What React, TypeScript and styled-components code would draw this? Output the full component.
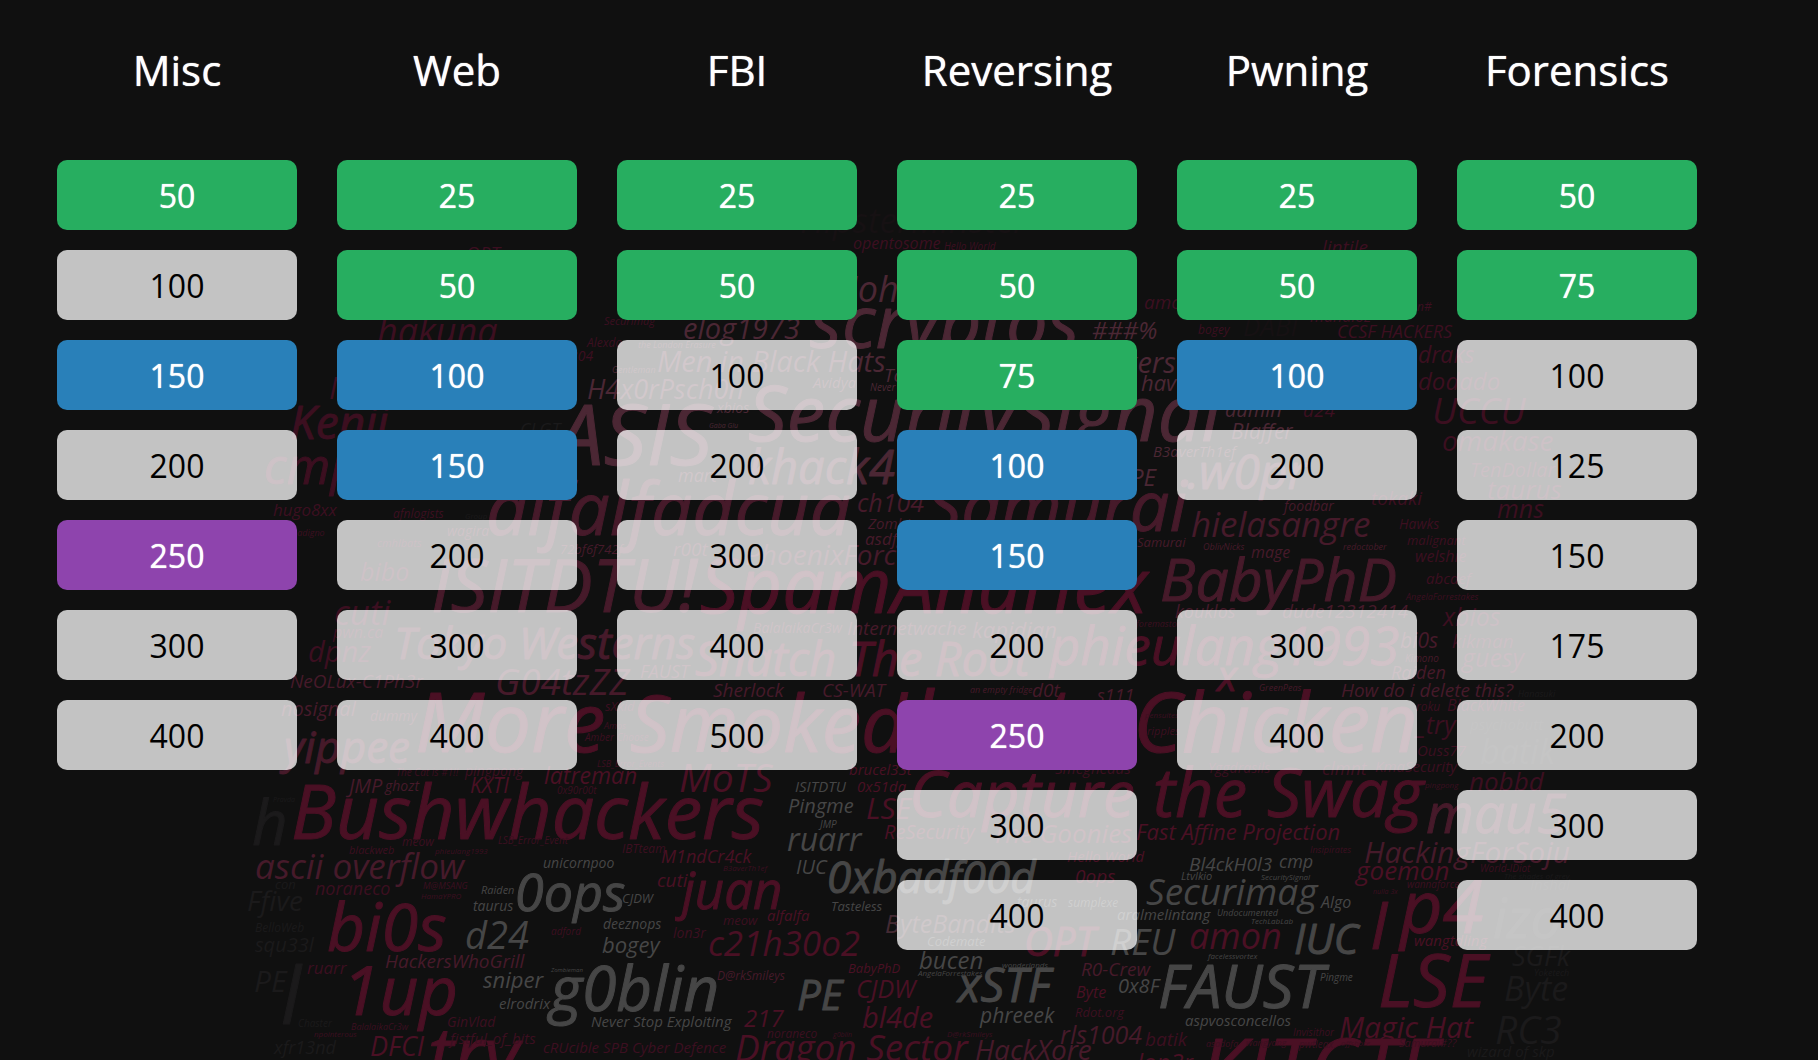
import React from 'react';
import styled, { createGlobalStyle, css } from 'styled-components';

const GlobalStyle = createGlobalStyle`
  *, *::before, *::after { box-sizing: border-box; }
  html, body, #root { min-height: 100%; }
  body {
    margin: 0;
    background: #101010;
    color: #fff;
    font-family: "Open Sans", "Noto Sans", sans-serif;
  }
`;

type Status = 'open' | 'solved' | 'attempted' | 'bonus';

/* null leaves a slot of the column empty. */
type Category = { name: string; challenges: ([number, Status] | null)[] };

const categories: Category[] = [
  {
    name: 'Misc',
    challenges: [[50, 'solved'], [100, 'open'], [150, 'attempted'], [200, 'open'], [250, 'bonus'], [300, 'open'], [400, 'open']],
  },
  {
    name: 'Web',
    challenges: [[25, 'solved'], [50, 'solved'], [100, 'attempted'], [150, 'attempted'], [200, 'open'], [300, 'open'], [400, 'open']],
  },
  {
    name: 'FBI',
    challenges: [[25, 'solved'], [50, 'solved'], [100, 'open'], [200, 'open'], [300, 'open'], [400, 'open'], [500, 'open']],
  },
  {
    name: 'Reversing',
    challenges: [[25, 'solved'], [50, 'solved'], [75, 'solved'], [100, 'attempted'], [150, 'attempted'], [200, 'open'], [250, 'bonus'], [300, 'open'], [400, 'open']],
  },
  {
    name: 'Pwning',
    challenges: [[25, 'solved'], [50, 'solved'], [100, 'attempted'], [200, 'open'], null, [300, 'open'], [400, 'open']],
  },
  {
    name: 'Forensics',
    challenges: [[50, 'solved'], [75, 'solved'], [100, 'open'], [125, 'open'], [150, 'open'], [175, 'open'], [200, 'open'], [300, 'open'], [400, 'open']],
  },
];

/* Team-name cloud: [text, left, baseline, span] grouped by tone. */
type Word = [string, number, number, number];

const cloud: { fill: string; words: Word[] }[] = [
  {
    fill: '#4b2734',
    words: [
      ['John', 848, 302, 72], ['elog1973', 683, 339, 117], ['scryptos', 810, 348, 270], ['###%', 1092, 339, 66],
      ['hackers', 1077, 373, 98], ['hav0c', 1141, 391, 58], ['Men in Black Hats', 657, 372, 225],
      ['H4x0rPsch0n', 587, 399, 158], ['Avidya', 813, 388, 42], ['Tokio', 884, 382, 44], ['Never', 870, 391, 26],
      ['ASIS', 556, 465, 156], ['SecuritySignal', 748, 441, 473], ['khack40n', 748, 484, 200],
      ['Gaba Glu', 709, 428, 30], ['xbios', 717, 413, 32], ['mart', 678, 482, 38], ['aumin', 1225, 417, 56],
      ['Blaffer', 1231, 439, 63], ['B3averTh1ef', 1153, 457, 83], ['.w0pr', 1187, 489, 120], ['PE', 1130, 486, 26],
      ['the London Erasure', 638, 348, 76], ['Gentleman', 612, 373, 44],
    ],
  },
  {
    fill: '#461a2a',
    words: [
      ['alfalfadcua', 486, 535, 367], ['Samurai', 926, 531, 262], ['ch104', 857, 512, 68], ['Zombies', 868, 529, 56],
      ['asdfg', 865, 545, 40], ['PhoenixForce', 745, 565, 164], ['r00t', 673, 556, 34], ['wagira', 447, 536, 42],
      ['72bf6f742f', 560, 554, 62], ['hielasangre', 1191, 537, 177], ['foodbar', 1284, 511, 50], ['Samurai', 1137, 547, 49],
      ['OblivNicks', 1203, 550, 42], ['mage', 1251, 558, 40], ['redoctober', 1343, 550, 46], ['ISITDTU!', 431, 612, 266],
      ['BabyPhD', 1160, 601, 237], ['kouklos', 1175, 618, 62], ['dude12312414', 1282, 618, 126],
      ['Tokyo Westerns', 394, 659, 301], ['FAUST', 640, 678, 48], ['G04tzZZ', 495, 695, 135],
      ['Internetwache', 847, 635, 120], ['kapidian', 972, 638, 84], ['BalalaikaCr3w', 753, 633, 88],
      ['Sherlock', 713, 697, 70], ['CS-WAT', 822, 697, 63], ['an empty fridge', 970, 693, 60], ['d0t', 1032, 697, 27],
      ['GreenPeas', 1259, 691, 42], ['Raiden', 1391, 679, 55], ['Kimono', 1405, 662, 34], ['s111', 1097, 702, 38],
      ['ascii overflow', 255, 879, 209], ['HackersWhoGrill', 385, 968, 137], ['JMP', 349, 793, 34],
      ['ghozt', 385, 791, 33], ['yippee', 284, 763, 126], ['nosignal', 281, 716, 75], ['dummy', 370, 721, 46],
      ['R0-Crew', 1081, 976, 70], ['rls1004', 1060, 1044, 82], ['HackXore', 975, 1060, 118],
      ['D@rkSmileys', 717, 980, 68], ['HackingForSoju', 1364, 863, 204], ['mau5', 1426, 833, 142],
      ['NeOLux-C1Ph3r', 290, 688, 133], ['bi0s', 1400, 648, 38], ['How do i delete this?', 1341, 697, 175],
    ],
  },
  {
    fill: '#4a1024',
    words: [
      ['SpamAndHex', 700, 613, 447], ['Snatch The Root', 695, 676, 335], ['phieulang1993', 1050, 665, 347],
      ['x', 1217, 691, 20], ['More', 415, 752, 191], ['Smoked', 630, 752, 276], ['Leet', 910, 752, 162],
      ['Chicken', 1133, 752, 284], ['Bushwhackers', 291, 839, 474], ['Capture', 909, 817, 226], ['the', 1153, 817, 94],
      ['Swag', 1267, 817, 156], ['latreman', 544, 784, 92], ['MoTS', 679, 792, 93], ['KXTI', 470, 793, 38],
      ['M1ndCr4ck', 661, 863, 92], ['bi0s', 327, 951, 120], ['1up', 342, 1015, 116], ['juan', 682, 909, 101],
      ['cuti', 657, 887, 30], ['c21h30o2', 708, 956, 154], ['0x51da', 857, 792, 50], ['brucel33t', 849, 775, 64],
      ['LSE', 866, 819, 45], ['ReSecurity', 884, 839, 92], ['The Goonies', 992, 843, 140],
      ['Fast Affine Projection', 1136, 840, 207], ['Hello World', 1067, 862, 76], ['0ops', 1075, 883, 40],
      ['OPT', 1024, 956, 71], ['CJDW', 856, 998, 59], ['BabyPhD', 848, 973, 52], ['bl4de', 862, 1028, 71],
      ['217', 744, 1027, 39], ['alfalfa', 767, 921, 41], ['Byte', 1076, 998, 31], ['amon', 1189, 949, 94],
      ['LSE', 1378, 1007, 110], ['I', 1370, 949, 18], ['p4', 1400, 933, 84], ['goemon', 1356, 880, 92],
      ['Magic Hat', 1339, 1038, 134], ['KITCTF', 1200, 1098, 238], ['try', 428, 1082, 91], ['DFCI', 370, 1056, 54],
      ['Dragon Sector', 735, 1061, 233], ['lon3r', 1137, 1071, 57], ['wangtdling', 1414, 946, 74],
    ],
  },
  {
    fill: '#3c0f20',
    words: [
      ['OPT', 466, 260, 34], ['hakuna', 377, 344, 119], ['Securimag', 604, 325, 50], ['Alexdo', 587, 347, 34],
      ['304', 570, 361, 23], ['N', 329, 399, 22], ['Kenji', 290, 439, 98], ['cmp', 264, 484, 96],
      ['opentosome', 853, 249, 89], ['Hello World', 944, 250, 50], ['amon', 1144, 309, 50], ['bogey', 1198, 334, 32],
      ['lintile', 1322, 254, 46], ['CCSF HACKERS', 1337, 338, 118], ['draks', 1418, 363, 56], ['dodado', 1418, 390, 82],
      ['n#', 1417, 311, 15], ['UCCU', 1432, 424, 94], ['omakase', 1442, 451, 112], ['TenDollar', 1470, 477, 86],
      ['taurus', 1487, 499, 74], ['mns', 1497, 518, 47], ['d24', 1303, 417, 32], ['mahaloz', 1310, 322, 60],
      ['hugo8xx', 273, 516, 65], ['afnlogists', 393, 518, 50], ['padigno', 292, 536, 32], ['bibo', 360, 581, 50],
      ['cuti', 334, 625, 57], ['pwn.ca', 333, 638, 50], ['dpnz', 308, 662, 63], ['cmhlbats', 377, 547, 46],
      ['tokaki', 1371, 505, 50], ['Hawks', 1399, 529, 41], ['malignant', 1407, 545, 58], ['welshie', 1415, 562, 50],
      ['abcdef', 1426, 584, 46], ['AngelaForrestakes', 1406, 600, 75], ['xbios', 1443, 626, 57],
      ['kikman', 1452, 648, 60], ['guesy', 1462, 667, 63], ['_try', 1416, 734, 40], ['Ouss77', 1417, 756, 48],
      ['roku', 1416, 711, 25], ['BlackWhite', 1447, 711, 80], ['KmaSecurity', 1375, 772, 80], ['clmnt', 1322, 775, 45],
      ['Yggdrasils', 1208, 773, 63], ['nobbd', 1469, 791, 75], ['The Cat is #1!!', 396, 776, 60],
      ['pingpong', 465, 776, 57], ['0x90r00t', 557, 794, 38], ['LSB_Error_Event', 498, 844, 68],
      ['meow', 402, 846, 32], ['blackweb', 349, 854, 44], ['phieulang1993', 435, 854, 50], ['noraneco', 315, 895, 77],
      ['M@MSANG', 423, 889, 46], ['HamaYPRO', 421, 899, 40], ['ruarr', 307, 974, 40], ['adford', 551, 935, 31],
      ['meow', 723, 925, 34], ['lon3r', 673, 938, 32], ['B3averTh1ef', 723, 871, 42], ['IBTteam', 622, 853, 42],
      ['GinVlad', 447, 1027, 50], ['fistful_of_bits', 450, 1044, 86], ['BalalaikaCr3w', 351, 1030, 60],
      ['npointerous', 314, 1037, 42], ['cRUcible SPB Cyber Defence', 543, 1053, 186], ['noraneco', 767, 1038, 52],
      ['g0blin', 833, 1037, 20], ['D@rkSmileys', 947, 1037, 45], ['Rdot.org', 1075, 1017, 50],
      ['batik', 1145, 1046, 42], ['asadofa', 1206, 1047, 34], ['wangyang', 1246, 1046, 40], ['Invisithor', 1293, 1036, 42],
      ['pwtleax', 1299, 1048, 34], ['offshore', 1341, 1046, 30], ['Samurai#??', 1399, 1047, 56],
      ['pingpong', 1425, 788, 34], ['Insipirates', 1310, 853, 40], ['World-IDiot', 1480, 872, 52],
      ['wannaforce', 1407, 888, 50], ['nulla 3x', 1373, 894, 23], ['Smegheads', 1055, 774, 76],
      ['pensuites', 1145, 718, 34], ['ripples', 1147, 735, 32], ['sXkid', 605, 711, 30], ['Amber Choose', 585, 741, 66],
      ['LSB_Error_Events', 597, 767, 70], ['Amos', 604, 729, 22], ['foremastor', 1136, 627, 46],
    ],
  },
  {
    fill: '#442a33',
    words: [['ByteBandits', 885, 933, 133]],
  },
  {
    fill: '#464646',
    words: [
      ['unicornpoo', 543, 868, 73], ['0ops', 515, 911, 110], ['Raiden', 481, 894, 33], ['taurus', 473, 911, 41],
      ['CJDW', 622, 903, 30], ['d24', 465, 949, 64], ['deeznops', 603, 929, 59], ['bogey', 602, 953, 58],
      ['sniper', 483, 988, 61], ['elrodrix', 499, 1009, 50], ['g0blin', 550, 1011, 168], ['Zombieman', 551, 972, 32],
      ['Never Stop Exploiting', 591, 1027, 142], ['ISITDTU', 795, 792, 51], ['Pingme', 788, 813, 66],
      ['JMP', 820, 828, 16], ['ruarr', 787, 851, 75], ['IUC', 796, 874, 31], ['0xbadf00d', 827, 893, 211],
      ['Tasteless', 831, 911, 50], ['Codemate', 927, 946, 58], ['bucen', 919, 969, 65], ['AngelaForrestakes', 918, 976, 68],
      ['wonderlands', 1002, 968, 47], ['xSTF', 958, 1002, 93], ['phreeek', 980, 1023, 75], ['PE', 797, 1010, 45],
      ['REU', 1110, 955, 66], ['0x8F', 1118, 993, 41], ['Bl4ckH0l3', 1189, 871, 85], ['cmp', 1279, 868, 35],
      ['LtvIkio', 1181, 880, 31], ['SecuritySignal', 1261, 880, 48], ['Securimag', 1146, 905, 170],
      ['Algo', 1321, 908, 31], ['aralmelintang', 1117, 920, 92], ['Undocumented', 1217, 916, 64],
      ['TechLabLab', 1251, 924, 44], ['IUC', 1294, 954, 65], ['facelessvortex', 1208, 959, 50],
      ['FAUST', 1158, 1008, 166], ['Pingme', 1320, 981, 33], ['aspvosconcellos', 1185, 1026, 106],
      ['taurus', 1017, 907, 40], ['sumplexe', 1068, 907, 50],
    ],
  },
  {
    fill: '#1b1a1b',
    words: [
      ['h', 252, 845, 36], ['Pravda', 273, 802, 22], ['Ffive', 247, 911, 56], ['con', 275, 889, 20],
      ['BelloWeb', 255, 932, 50], ['squ33l', 255, 952, 58], ['PE', 254, 992, 32], ['l', 281, 1024, 20],
      ['Chaster', 298, 1027, 34], ['xfr13nd', 274, 1054, 62], ['batik', 1480, 764, 76], ['psychobutt', 1470, 730, 72],
      ['izo', 1493, 938, 68], ['Inshal', 1530, 890, 40], ['SGFk', 1512, 966, 58], ['Yoketech', 1534, 976, 36],
      ['Byte', 1504, 1001, 65], ['RC3', 1495, 1044, 66], ['wizard of skp', 1467, 1057, 88], ['The shades of grey', 1504, 879, 66],
      ['Hanasuki', 1518, 697, 38], ['CLGT', 520, 436, 40], ['Group', 465, 519, 22],
    ],
  },
  {
    fill: '#161113',
    words: [['HipsterMinster', 800, 233, 230], ['DABI', 1243, 336, 54]],
  },
];

const CLOUD_FONT = '"Open Sans", "Noto Sans", sans-serif';

const measure = (() => {
  const context = document.createElement('canvas').getContext('2d')!;
  return (text: string) => {
    context.font = `italic 100px ${CLOUD_FONT}`;
    return context.measureText(text).width;
  };
})();

/* A word is set at the whole-pixel size that lets it fill its span. */
const sizeFor = (text: string, span: number) => Math.round((span * 100) / measure(text));

/* Display-size words carry a thin outline. */
const outlineFor = (size: number) => (size >= 40 ? 1 : 0);

const Page = styled.div`
  position: relative;
  min-height: 100vh;
  overflow: hidden;
`;

const Backdrop = styled.svg`
  position: absolute;
  inset: 0;
  width: 100%;
  height: 100%;
  font-family: ${CLOUD_FONT};
  font-style: italic;
  pointer-events: none;
  user-select: none;
`;

const Board = styled.main`
  position: relative;
  display: grid;
  grid-template-columns: repeat(6, minmax(0, 1fr));
  column-gap: 40px;
  align-items: start;
  padding: 40px 121px 40px 57px;
`;

const Column = styled.section`
  display: flex;
  flex-direction: column;
  gap: 20px;
`;

const Title = styled.h2`
  margin: 0 0 40px;
  font-size: 42px;
  font-weight: 400;
  line-height: 60px;
  text-align: center;
  text-shadow: 0 0 1px #fff;
`;

const filled = css`
  color: #fff;
  text-shadow: 0 0 1px #fff;
`;

const tones = {
  open: css`background: rgba(255, 255, 255, 0.75); color: #000;`,
  solved: css`background: #27ae60; ${filled}`,
  attempted: css`background: #2980b9; ${filled}`,
  bonus: css`background: #8e44ad; ${filled}`,
};

const Challenge = styled.button<{ $status: Status }>`
  height: 70px;
  padding: 2px 16px 0;
  border: 0;
  border-radius: 10px;
  font: 400 32px/44px "Open Sans", "Noto Sans", sans-serif;
  text-align: center;
  cursor: pointer;
  ${({ $status }) => tones[$status]}
`;

const EmptySlot = styled.div`
  height: 70px;
`;

function CloudWord({ word: [text, x, y, span], fill }: { word: Word; fill: string }) {
  const size = sizeFor(text, span);
  return (
    <text x={x} y={y} fontSize={size} stroke={fill} strokeWidth={outlineFor(size)} strokeLinejoin="round">
      {text}
    </text>
  );
}

export default function App() {
  return (
    <Page>
      <GlobalStyle />
      <Backdrop viewBox="0 0 1818 1060" preserveAspectRatio="xMidYMid slice" aria-hidden="true">
        {cloud.map(({ fill, words }) => (
          <g key={fill} fill={fill}>
            {words.map((word) => (
              <CloudWord key={word.join('-')} word={word} fill={fill} />
            ))}
          </g>
        ))}
      </Backdrop>
      <Board>
        {categories.map(({ name, challenges }) => (
          <Column key={name} aria-label={name}>
            <Title>{name}</Title>
            {challenges.map((challenge, slot) =>
              challenge ? (
                <Challenge key={slot} type="button" $status={challenge[1]}>
                  {challenge[0]}
                </Challenge>
              ) : (
                <EmptySlot key={slot} />
              ),
            )}
          </Column>
        ))}
      </Board>
    </Page>
  );
}
